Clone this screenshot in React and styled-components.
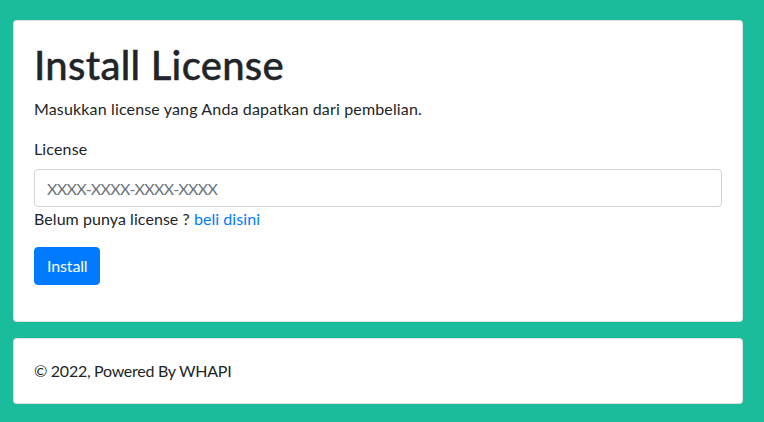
import React from "react";
import styled, { createGlobalStyle } from "styled-components";

const GlobalStyle = createGlobalStyle`
  *, *::before, *::after { box-sizing: border-box; }
  html, body { margin: 0; padding: 0; }
  body {
    background: #1abc9c;
    font-family: Lato, "Liberation Sans", sans-serif;
    font-size: 16px;
    line-height: 1.5;
    color: #212529;
    letter-spacing: 0.15px;
  }
`;

const Page = styled.div`
  width: 730px;
  margin: 20px 0 18px 13px;
  display: flex;
  flex-direction: column;
  gap: 16px;
`;

const Card = styled.div`
  background: #fff;
  border: 1px solid rgba(0, 0, 0, 0.125);
  border-radius: 4px;
  padding: 20px 20px ${(p) => p.$bottom || 20}px;
`;

const Footer = styled(Card)`
  letter-spacing: -0.27px;
`;

const Title = styled.h1`
  margin: 0 0 8px;
  font-size: 40px;
  font-weight: 500;
  line-height: 1.2;
  letter-spacing: 0.28px;
  -webkit-text-stroke: 0.4px #212529;
`;

const Lead = styled.p`
  margin: 0 0 16px;
`;

const Label = styled.label`
  display: block;
  margin-bottom: 8px;
`;

const Input = styled.input`
  display: block;
  width: 100%;
  height: 38px;
  padding: 6px 12px;
  font: inherit;
  letter-spacing: -0.6px;
  color: #495057;
  background: #fff;
  border: 1px solid #ced4da;
  border-radius: 4px;
  outline: none;
  &::placeholder { color: #6c757d; opacity: 1; }
`;

const Hint = styled.div`
  margin-bottom: 16px;
  letter-spacing: 0.06px;
`;

const Link = styled.a`
  color: #007bff;
  text-decoration: none;
`;

const Button = styled.button`
  display: inline-block;
  height: 38px;
  padding: 6px 12px;
  font: inherit;
  letter-spacing: -0.14px;
  color: #fff;
  background: #007bff;
  border: 1px solid #007bff;
  border-radius: 4px;
`;

export default function App() {
  return (
    <>
      <GlobalStyle />
      <Page>
        <Card $bottom={36}>
          <Title>Install License</Title>
          <Lead>Masukkan license yang Anda dapatkan dari pembelian.</Lead>
          <Label htmlFor="license">License</Label>
          <Input id="license" placeholder="XXXX-XXXX-XXXX-XXXX" />
          <Hint>
            Belum punya license ? <Link href="#">beli disini</Link>
          </Hint>
          <Button type="button">Install</Button>
        </Card>
        <Footer>© 2022, Powered By WHAPI</Footer>
      </Page>
    </>
  );
}
